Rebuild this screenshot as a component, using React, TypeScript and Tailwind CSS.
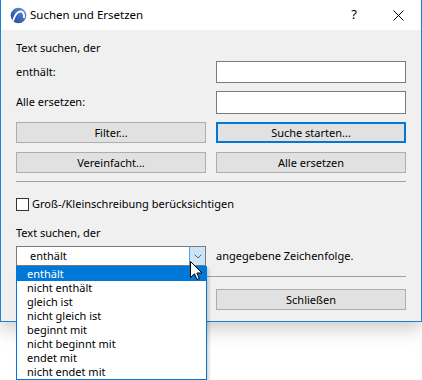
import { useState } from "react";

const items = [
  "enthält",
  "nicht enthält",
  "gleich ist",
  "nicht gleich ist",
  "beginnt mit",
  "nicht beginnt mit",
  "endet mit",
  "nicht endet mit",
];

function Button({ label, focused }: { label: string; focused?: boolean }) {
  return (
    <button
      className={
        "h-[21px] w-full bg-[#e1e1e1] text-[11px] leading-none text-black " +
        (focused ? "border-2 border-[#0078d7]" : "border border-[#adadad]")
      }
    >
      {label}
    </button>
  );
}

function AppIcon() {
  return (
    <svg width="17" height="17" viewBox="0 0 17 17">
      <defs>
        <linearGradient id="ac" x1="0" y1="1" x2="1" y2="0">
          <stop offset="0" stopColor="#1a3f92" />
          <stop offset="1" stopColor="#6a9ae6" />
        </linearGradient>
      </defs>
      <circle cx="8.5" cy="8.5" r="7.8" fill="url(#ac)" />
      <path d="M3 14 Q6 4 11 4.5 Q14.5 5 14 11" fill="none" stroke="#fff" strokeWidth="1.8" />
    </svg>
  );
}

export default function App() {
  const [selected] = useState(0);

  return (
    <div
      className="relative h-[380px] w-[422px] overflow-hidden bg-white text-[11px] text-black"
      style={{ fontFamily: '"Noto Sans", "Open Sans", sans-serif' }}
    >
      <div className="w-[422px] border-x border-b border-[#1883d7] shadow-[0_6px_18px_rgba(0,0,0,0.22)]">
        {/* title bar */}
        <div className="flex h-[30px] items-center bg-white pl-[9px]">
          <AppIcon />
          <span className="ml-[3px] text-[11.5px]">Suchen und Ersetzen</span>
          <span className="ml-auto mr-[36px] text-[13px]">?</span>
          <svg className="mr-[17px]" width="11" height="11" viewBox="0 0 11 11">
            <path d="M0.5 0.5 L10.5 10.5 M10.5 0.5 L0.5 10.5" stroke="#000" strokeWidth="1" />
          </svg>
        </div>

        <div className="bg-[#f0f0f0] px-[15px] pb-[11px] pt-[10px]">
          <div className="h-[16px] leading-[16px]">Text suchen, der</div>

          <div className="mt-[5px] grid h-[22px] grid-cols-[190px_190px] items-center justify-between">
            <span>enthält:</span>
            <div className="h-[22px] border border-[#7a7a7a] bg-white" />
          </div>
          <div className="mt-[8px] grid h-[23px] grid-cols-[190px_190px] items-center justify-between">
            <span>Alle ersetzen:</span>
            <div className="h-[23px] border border-[#7a7a7a] bg-white" />
          </div>

          <div className="mt-[8px] grid grid-cols-[190px_190px] justify-between">
            <Button label="Filter..." />
            <Button label="Suche starten..." focused />
          </div>
          <div className="mt-[9px] grid grid-cols-[190px_190px] justify-between">
            <Button label="Vereinfacht..." />
            <Button label="Alle ersetzen" />
          </div>

          <div className="mt-[8px] h-px bg-[#a0a0a0]" />

          <div className="mt-[14px] flex h-[16px] items-center">
            <div className="h-[13px] w-[13px] border border-[#333] bg-white" />
            <span className="ml-[3px]">Groß-/Kleinschreibung berücksichtigen</span>
          </div>

          <div className="mt-[13px] h-[16px] leading-[16px]">Text suchen, der</div>

          <div className="mt-[5px] grid h-[20px] grid-cols-[190px_190px] items-center justify-between">
            <div className="flex h-[20px] border border-[#7a7a7a] bg-white">
              <span className="flex-1 pl-[13px] leading-[18px]">enthält</span>
              <div className="flex w-[16px] items-center justify-center border-l border-[#569de5] bg-[#cce4f7]">
                <svg width="8" height="5" viewBox="0 0 8 5">
                  <path d="M0.5 0.5 L4 4 L7.5 0.5" fill="none" stroke="#606060" strokeWidth="1" />
                </svg>
              </div>
            </div>
            <span>angegebene Zeichenfolge.</span>
          </div>

          <div className="mt-[10px] h-px bg-[#a0a0a0]" />

          <div className="mt-[12px] grid grid-cols-[190px_190px] justify-between">
            <div />
            <Button label="Schließen" />
          </div>
        </div>
      </div>

      {/* open dropdown list */}
      <ul className="absolute left-[16px] top-[266px] w-[191px] border border-[#0078d7] bg-white shadow-[2px_2px_3px_rgba(0,0,0,0.18)]">
        {items.map((it, i) => (
          <li
            key={it}
            className={
              "h-[14px] pl-[10px] leading-[14px] " +
              (i === selected ? "bg-[#0078d7] text-white" : "text-black")
            }
          >
            {it}
          </li>
        ))}
      </ul>

      {/* mouse pointer */}
      <svg className="absolute left-[190px] top-[261px]" width="13" height="20" viewBox="0 0 13 20">
        <path
          d="M0.5 0.5 L0.5 16.5 L4.5 12.8 L7 18.5 L9.3 17.5 L6.9 12 L12 12 Z"
          fill="#fff"
          stroke="#000"
          strokeWidth="1"
          strokeLinejoin="miter"
        />
      </svg>
    </div>
  );
}
